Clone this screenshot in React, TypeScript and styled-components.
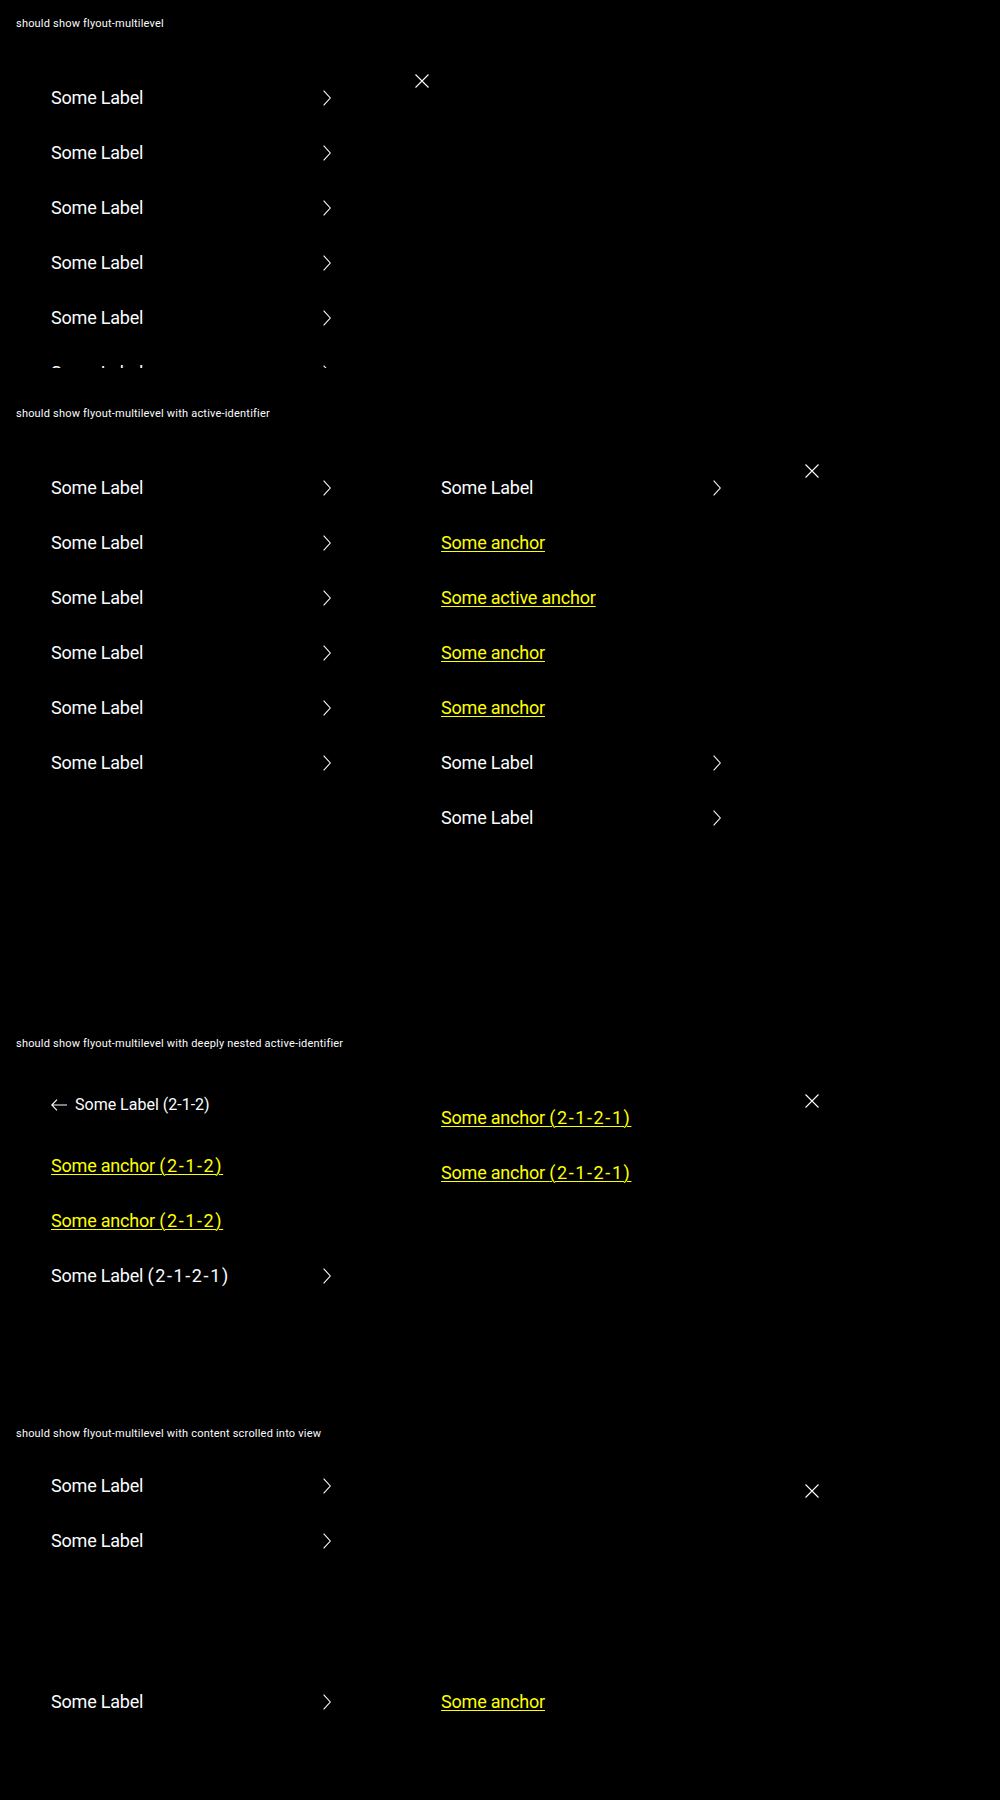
import React, { FC } from 'react';
import styled, { createGlobalStyle } from 'styled-components';

const colors = {
  background: '#000000',
  primary: '#fbfcff',
  anchor: '#ffff00',
};

const GlobalStyle = createGlobalStyle`
  html, body {
    margin: 0;
    padding: 0;
    background: ${colors.background};
  }

  body {
    font-family: Roboto, "Liberation Sans", Arial, sans-serif;
    color: ${colors.primary};
  }
`;

const Playground = styled.section<{ $height: number }>`
  box-sizing: border-box;
  height: ${(p) => p.$height}px;
  padding-top: 16px;
`;

const PlaygroundTitle = styled.p`
  margin: 0 0 0 16px;
  font-size: 11px;
  line-height: 16px;
  letter-spacing: 0.2px;
  color: ${colors.primary};
`;

const Flyout = styled.div<{ $height: number }>`
  display: flex;
  align-items: flex-start;
  height: ${(p) => p.$height}px;
  margin-top: 8px;
  padding-left: 51px;
  overflow: hidden;
`;

const Columns = styled.div`
  display: flex;
  align-items: flex-start;
  gap: 110px;
`;

const Column = styled.ul<{ $offset?: number }>`
  display: flex;
  flex-direction: column;
  width: 280px;
  margin: 0;
  padding: ${(p) => p.$offset ?? 30}px 0 0;
  list-style: none;
`;

const Item = styled.li`
  display: flex;
  align-items: center;
  justify-content: space-between;
  height: 55px;
  font-size: 18px;
  line-height: 24px;
  letter-spacing: -0.2px;
`;

const LabelButton = styled.span`
  color: ${colors.primary};
`;

const Anchor = styled.a`
  color: ${colors.anchor};
  text-decoration: underline;
  text-decoration-thickness: 1px;
  text-underline-offset: 2px;
`;

// the (2-1-2) path suffix sets wider in the reference face
const Numbering = styled.span<{ $spacing: number }>`
  letter-spacing: ${(p) => p.$spacing}px;
`;

const Spacer = styled.li<{ $height: number }>`
  height: ${(p) => p.$height}px;
`;

const BackButton = styled.li`
  display: flex;
  align-items: center;
  gap: 8px;
  height: 30px;
  margin-bottom: 18px;
  font-size: 16px;
  line-height: 22px;
  color: ${colors.primary};
`;

const CloseButton = styled.button`
  display: flex;
  align-items: center;
  justify-content: center;
  width: 14px;
  height: 14px;
  margin: 34px 0 0 84px;
  padding: 0;
  border: 0;
  background: transparent;
  color: ${colors.primary};
`;

const ChevronIcon: FC = () => (
  <svg width="8" height="16" viewBox="0 0 8 16" fill="none" aria-hidden="true">
    <path d="M0.6 0.6 L7.3 8 L0.6 15.4" stroke={colors.primary} strokeWidth="1.1" />
  </svg>
);

const CloseIcon: FC = () => (
  <svg width="14" height="14" viewBox="0 0 14 14" fill="none" aria-hidden="true">
    <path d="M0.5 0.5 L13.5 13.5 M13.5 0.5 L0.5 13.5" stroke={colors.primary} strokeWidth="1.1" />
  </svg>
);

const ArrowLeftIcon: FC = () => (
  <svg width="16" height="12" viewBox="0 0 16 12" fill="none" aria-hidden="true">
    <path d="M0.8 6 H16 M6 0.6 L0.8 6 L6 11.4" stroke={colors.primary} strokeWidth="1.1" />
  </svg>
);

const withNumbering = (text: string, spacing: number) => {
  const match = text.match(/^(.*?)(\(.*\))$/);
  if (!match) return text;
  return (
    <>
      {match[1]}
      <Numbering $spacing={spacing}>{match[2]}</Numbering>
    </>
  );
};

const Label: FC<{ text?: string }> = ({ text = 'Some Label' }) => (
  <Item>
    <LabelButton>{withNumbering(text, 1.6)}</LabelButton>
    <ChevronIcon />
  </Item>
);

const Link: FC<{ text?: string }> = ({ text = 'Some anchor' }) => (
  <Item>
    <Anchor href="#">{withNumbering(text, 1.6)}</Anchor>
  </Item>
);

const Close: FC = () => (
  <CloseButton type="button" aria-label="Dismiss flyout">
    <CloseIcon />
  </CloseButton>
);

const App: FC = () => (
  <>
    <GlobalStyle />

    <Playground $height={390}>
      <PlaygroundTitle>should show flyout-multilevel</PlaygroundTitle>
      <Flyout $height={328}>
        <Columns>
          <Column>
            <Label />
            <Label />
            <Label />
            <Label />
            <Label />
            <Label />
          </Column>
        </Columns>
        <Close />
      </Flyout>
    </Playground>

    <Playground $height={630}>
      <PlaygroundTitle>should show flyout-multilevel with active-identifier</PlaygroundTitle>
      <Flyout $height={568}>
        <Columns>
          <Column>
            <Label />
            <Label />
            <Label />
            <Label />
            <Label />
            <Label />
          </Column>
          <Column>
            <Label />
            <Link />
            <Link text="Some active anchor" />
            <Link />
            <Link />
            <Label />
            <Label />
          </Column>
        </Columns>
        <Close />
      </Flyout>
    </Playground>

    <Playground $height={390}>
      <PlaygroundTitle>should show flyout-multilevel with deeply nested active-identifier</PlaygroundTitle>
      <Flyout $height={328}>
        <Columns>
          <Column>
            <BackButton>
              <ArrowLeftIcon />
              <span>Some Label (2-1-2)</span>
            </BackButton>
            <Link text="Some anchor (2-1-2)" />
            <Link text="Some anchor (2-1-2)" />
            <Label text="Some Label (2-1-2-1)" />
          </Column>
          <Column>
            <Link text="Some anchor (2-1-2-1)" />
            <Link text="Some anchor (2-1-2-1)" />
          </Column>
        </Columns>
        <Close />
      </Flyout>
    </Playground>

    <Playground $height={390}>
      <PlaygroundTitle>should show flyout-multilevel with content scrolled into view</PlaygroundTitle>
      <Flyout $height={328}>
        <Columns>
          <Column $offset={8}>
            <Label />
            <Label />
            <Spacer $height={106} />
            <Label />
          </Column>
          <Column $offset={8}>
            <Spacer $height={216} />
            <Link />
          </Column>
        </Columns>
        <Close />
      </Flyout>
    </Playground>
  </>
);

export default App;
